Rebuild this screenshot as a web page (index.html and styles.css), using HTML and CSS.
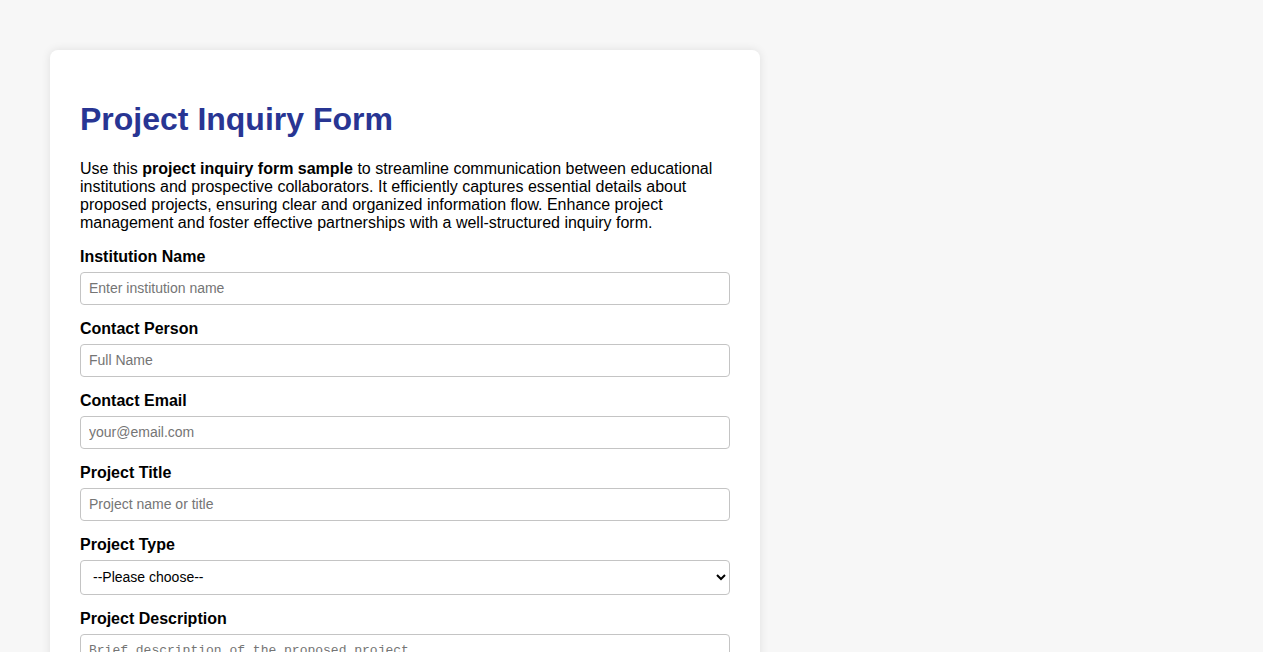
FILE: index.html
```html
<!DOCTYPE html>
<html lang="en">
<head>
<meta charset="utf-8">
<title>Project Inquiry Form</title>
<link rel="stylesheet" href="styles.css">
</head>
<body>
<div class="card">
  <h1 class="title">Project Inquiry Form</h1>
  <p class="intro">Use this <strong>project inquiry form sample</strong> to streamline communication between educational institutions and prospective collaborators. It efficiently captures essential details about proposed projects, ensuring clear and organized information flow. Enhance project management and foster effective partnerships with a well-structured inquiry form.</p>
  <form class="form">
    <div class="field">
      <label class="label" for="inst">Institution Name</label>
      <input class="input" id="inst" type="text" placeholder="Enter institution name">
    </div>
    <div class="field">
      <label class="label" for="person">Contact Person</label>
      <input class="input" id="person" type="text" placeholder="Full Name">
    </div>
    <div class="field">
      <label class="label" for="email">Contact Email</label>
      <input class="input" id="email" type="email" placeholder="your@email.com">
    </div>
    <div class="field">
      <label class="label" for="ptitle">Project Title</label>
      <input class="input" id="ptitle" type="text" placeholder="Project name or title">
    </div>
    <div class="field">
      <label class="label" for="ptype">Project Type</label>
      <select class="select" id="ptype">
        <option>--Please choose--</option>
        <option>Research</option>
        <option>Curriculum Development</option>
        <option>Community Outreach</option>
      </select>
    </div>
    <div class="field">
      <label class="label" for="pdesc">Project Description</label>
      <textarea class="textarea" id="pdesc" rows="5" placeholder="Brief description of the proposed project"></textarea>
    </div>
  </form>
</div>
</body>
</html>
```
FILE: styles.css
```css
html, body {
  margin: 0;
  padding: 0;
}
body {
  background: #f7f7f7;
  font-family: "Liberation Sans", Arial, sans-serif;
  color: #000;
}
.card {
  width: 650px;
  margin: 50px 0 0 50px;
  padding: 30px;
  background: #fff;
  border-radius: 8px;
  box-shadow: 0 0 10px rgba(0, 0, 0, 0.1);
}
.title {
  font-size: 32px;
  font-weight: bold;
  color: #283593;
  margin: 21.44px 0;
}
.intro {
  font-size: 16px;
  margin: 16px 0;
}
.form {
  margin: 0;
}
.field {
  margin-bottom: 15px;
}
.label {
  display: block;
  font-weight: bold;
  font-size: 16px;
  line-height: 18px;
  margin-bottom: 6px;
}
.input, .select, .textarea {
  display: block;
  box-sizing: border-box;
  width: 100%;
  border: 1px solid #c4c4c4;
  border-radius: 4px;
  background: #fff;
  margin: 0;
}
.input {
  height: 33px;
  padding: 0 8px;
  font-family: "Liberation Sans", Arial, sans-serif;
  font-size: 14px;
}
.select {
  height: 35px;
  padding: 0 8px;
  font-family: "Liberation Sans", Arial, sans-serif;
  font-size: 14px;
  color: #000;
}
.textarea {
  padding: 8px;
  font-family: "Liberation Mono", monospace;
  font-size: 13px;
  resize: vertical;
}
.input::placeholder, .textarea::placeholder {
  color: #757575;
}
```
